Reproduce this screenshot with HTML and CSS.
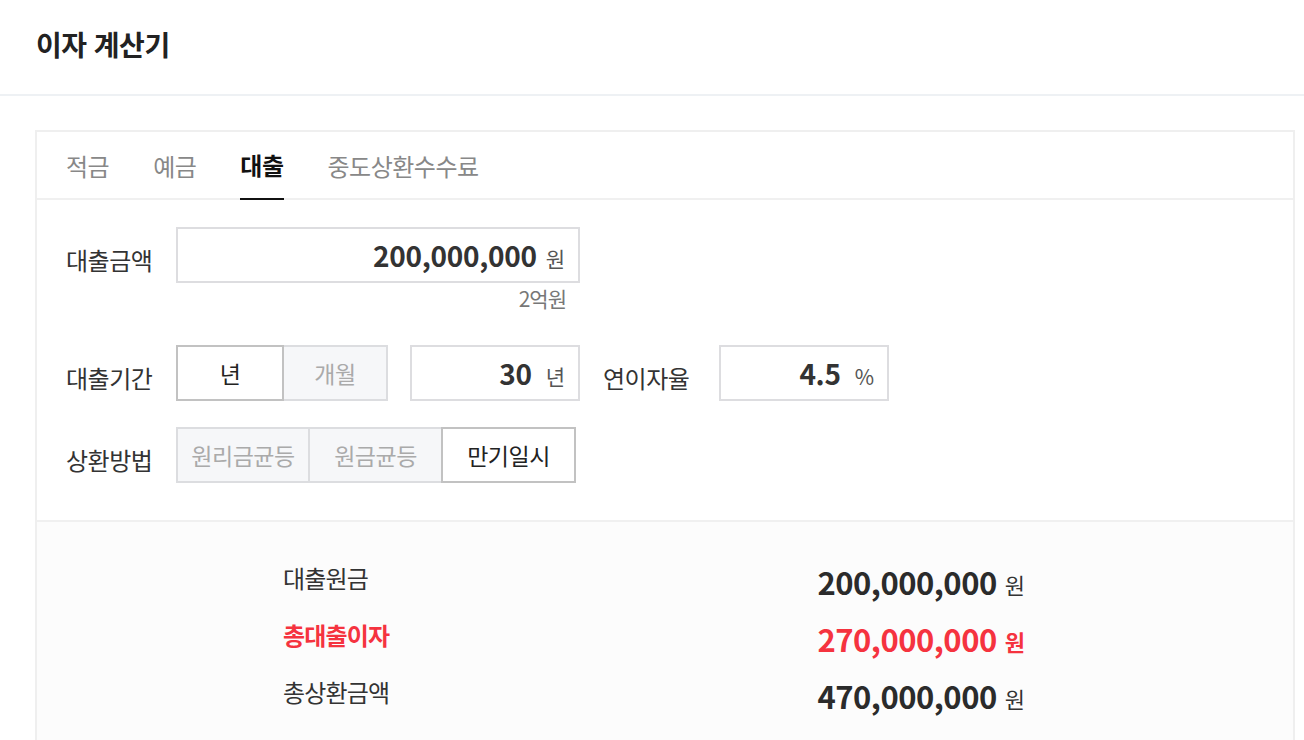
FILE: index.html
```html
<!DOCTYPE html>
<html lang="ko">
<head>
<meta charset="utf-8">
<link rel="stylesheet" href="styles.css">
</head>
<body>
<div class="page">
  <header class="header"><h1 class="title">이자 계산기</h1></header>
  <div class="card">
    <nav class="tabs">
      <span class="tab">적금</span>
      <span class="tab">예금</span>
      <span class="tab active">대출</span>
      <span class="tab">중도상환수수료</span>
    </nav>
    <div class="form">
      <div class="row row-amount">
        <span class="label">대출금액</span>
        <div class="field-wrap">
          <div class="field field-amount"><span class="val">200,000,000</span><span class="unit">원</span></div>
          <div class="hint">2억원</div>
        </div>
      </div>
      <div class="row row-term">
        <span class="label">대출기간</span>
        <div class="seg seg-term">
          <span class="opt on">년</span>
          <span class="opt">개월</span>
        </div>
        <div class="field field-small"><span class="val">30</span><span class="unit">년</span></div>
        <span class="label label-rate">연이자율</span>
        <div class="field field-small field-rate"><span class="val">4.5</span><span class="unit">%</span></div>
      </div>
      <div class="row row-method">
        <span class="label">상환방법</span>
        <div class="seg seg-method">
          <span class="opt o1">원리금균등</span>
          <span class="opt o2">원금균등</span>
          <span class="opt o3 on">만기일시</span>
        </div>
      </div>
    </div>
    <div class="results">
      <div class="res-row"><span class="res-label">대출원금</span><span class="res-val"><b>200,000,000</b><span class="res-unit">원</span></span></div>
      <div class="res-row red"><span class="res-label">총대출이자</span><span class="res-val"><b>270,000,000</b><span class="res-unit">원</span></span></div>
      <div class="res-row"><span class="res-label">총상환금액</span><span class="res-val"><b>470,000,000</b><span class="res-unit">원</span></span></div>
    </div>
  </div>
</div>
</body>
</html>
```
FILE: styles.css
```css
* { box-sizing: border-box; }
html, body { margin: 0; padding: 0; background: #fff; }
body {
  font-family: "Noto Sans CJK KR", "Noto Sans", sans-serif;
  color: #333;
  overflow: hidden;
}
.page { width: 1304px; height: 740px; overflow: hidden; }
.header {
  height: 96px;
  border-bottom: 2px solid #eef1f4;
  padding-left: 36px;
  display: flex;
  align-items: center;
}
.title {
  margin: 0;
  font-size: 28px;
  font-weight: 700;
  color: #222;
  letter-spacing: -0.5px;
  margin-top: -6px;
}
.card {
  margin: 34px 0 0 35px;
  width: 1260px;
  height: 700px;
  border: 2px solid #efefef;
}
.tabs {
  height: 68px;
  border-bottom: 2px solid #f0f0f0;
  display: flex;
  gap: 44px;
  padding-left: 29px;
}
.tab {
  font-size: 24px;
  color: #888;
  display: flex;
  align-items: center;
  height: 68px;
  letter-spacing: -0.5px;
  padding-bottom: 2px;
}
.tab.active {
  color: #111;
  font-weight: 700;
  border-bottom: 2px solid #111;
}
.form {
  padding: 27px 0 37px 29px;
  display: flex;
  flex-direction: column;
}
.row { display: flex; align-items: flex-start; }
.row-term { margin-top: 22px; }
.row-method { margin-top: 26px; }
.label {
  width: 110px;
  height: 56px;
  display: flex;
  align-items: center;
  font-size: 24px;
  color: #333;
  letter-spacing: -0.5px;
  padding-top: 8px;
}
.field-wrap { display: flex; flex-direction: column; align-items: flex-end; width: 404px; }
.field {
  height: 56px;
  border: 2px solid #dddde0;
  background: #fff;
  display: flex;
  align-items: center;
  justify-content: flex-end;
  padding-right: 13px;
  gap: 9px;
}
.field-amount { width: 404px; }
.val { font-size: 28px; font-weight: 700; color: #333; letter-spacing: -0.3px; }
.unit { font-size: 21px; color: #555; padding-top: 6px; }
.hint {
  font-size: 21px;
  color: #777;
  margin-top: 0;
  padding-right: 14px;
  letter-spacing: -1px;
  height: 40px;
}
.seg { display: flex; }
.opt {
  height: 56px;
  display: flex;
  align-items: center;
  justify-content: center;
  font-size: 23px;
  color: #aaa;
  background: #f6f7f9;
  border: 2px solid #dcdde0;
  letter-spacing: -0.5px;
}
.opt.on { background: #fff; color: #222; border-color: #c2c2c2; }
.seg-term .opt.on { width: 108px; }
.seg-term .opt + .opt { width: 104px; border-left: none; }
.field-small { width: 170px; margin-left: 22px; gap: 14px; }
.field-rate { margin-left: 0; }
.label-rate { width: 116px; margin-left: 23px; }
.seg-method .o1 { width: 134px; }
.seg-method .o2 { width: 133px; border-left: none; }
.seg-method .o3 { width: 135px; border-left: 2px solid #c2c2c2; margin-left: -2px; }
.results {
  border-top: 2px solid #f0f0f0;
  background: #fcfcfc;
  height: 400px;
  padding: 31px 0 0 246px;
}
.res-row {
  width: 742px;
  height: 57px;
  display: flex;
  justify-content: space-between;
  align-items: center;
}
.res-label { font-size: 24px; color: #333; letter-spacing: -0.8px; margin-top: -8px; }
.res-val { display: flex; align-items: center; gap: 8px; }
.res-val b { font-size: 31px; font-weight: 700; color: #2b2b2b; letter-spacing: -0.5px; }
.res-unit { font-size: 22px; color: #333; padding-top: 4px; }
.red .res-label, .red .res-val b, .red .res-unit { color: #f5333f; }
.red .res-label, .red .res-unit { font-weight: 700; }
```
